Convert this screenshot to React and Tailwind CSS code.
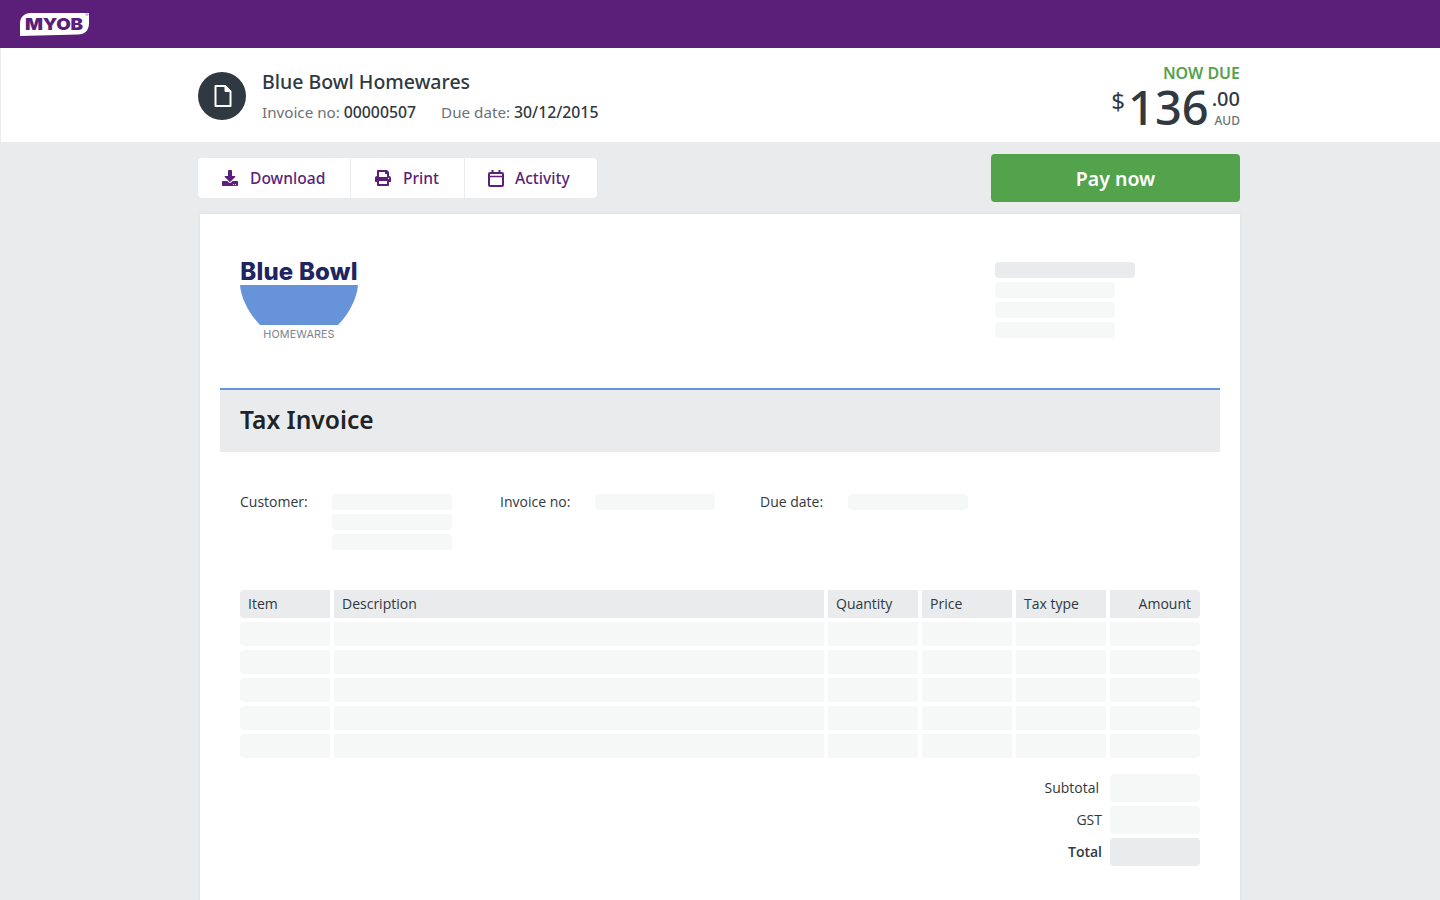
import { FaDownload, FaPrint } from 'react-icons/fa';

const columns = [
    { label: 'Item', width: 'w-[90px]' },
    { label: 'Description', width: 'w-[490px]' },
    { label: 'Quantity', width: 'w-[90px]' },
    { label: 'Price', width: 'w-[90px]' },
    { label: 'Tax type', width: 'w-[90px]' },
    { label: 'Amount', width: 'w-[90px]', right: true },
];

const rows = [0, 1, 2, 3, 4];

function MyobLogo() {
    return (
        <div className="relative w-[69px] h-[24px]">
            <svg width="69" height="24" viewBox="0 0 69 24" className="absolute left-0 top-0">
                <path d="M0 24 L0 12 C0 5 4 1 11 1 L69 1 L69 11 C69 18 65 22.5 58 22.5 Z" fill="#fff" />
            </svg>
            <span className="absolute left-[5px] top-[3px] origin-left scale-x-[1.14] font-['Inter',sans-serif] font-black text-[16.5px] leading-[18px] text-[#5b1f7a] tracking-[-0.2px]">
                MYOB
            </span>
            <span className="absolute right-[0.5px] top-[1px] text-[4px] leading-[4px] text-[#5b1f7a]">®</span>
        </div>
    );
}

function ToolButton({ icon, label, className }) {
    return (
        <div className={`flex items-center h-10 text-[#5b1f7a] font-medium text-[15.6px] ${className}`}>
            {icon}
            <span className="mt-[2px]">{label}</span>
        </div>
    );
}

function Placeholder({ className }) {
    return <div className={`rounded-[4px] bg-[#f6f7f7] ${className}`} />;
}

function TotalRow({ label, labelClass, boxClass }) {
    return (
        <div className="flex items-center justify-end">
            <span className={`text-sm ${labelClass}`}>{label}</span>
            <div className={`w-[90px] h-7 rounded-[4px] ${boxClass}`} />
        </div>
    );
}

export default function App() {
    return (
        <div className="h-screen overflow-hidden bg-[#e9ebec] font-['Open_Sans',sans-serif] text-[#303841]">
            {/* Top bar */}
            <header className="h-12 bg-[#5b1f7a] flex items-center pl-5">
                <MyobLogo />
            </header>

            {/* Invoice summary */}
            <section className="h-[94px] ml-[1px] pr-[3px] bg-white flex justify-center">
                <div className="w-[1042px] flex items-center justify-between">
                    <div className="flex items-center pt-[2px]">
                        <div className="size-12 rounded-full bg-[#303841] flex items-center justify-center">
                            <svg width="20" height="24" viewBox="0 0 20 24" fill="none" stroke="#fff" strokeWidth="2" strokeLinejoin="round" className="ml-[2px]">
                                <path d="M2.5 2 H12 L17.5 7.5 V22 H2.5 Z" />
                                <path d="M12 2 V7.5 H17.5" fill="#fff" strokeWidth="1" />
                            </svg>
                        </div>
                        <div className="ml-4">
                            <div className="font-['Noto_Sans',sans-serif] font-medium text-[19.5px] leading-7">Blue Bowl Homewares</div>
                            <div className="flex mt-1 font-['Noto_Sans',sans-serif] text-[15.2px] leading-6 text-[#6b7178]">
                                <span>Invoice no: <span className="font-medium text-[15.8px] text-[#303841]">00000507</span></span>
                                <span className="ml-[25px]">Due date: <span className="font-medium text-[15.8px] text-[#303841]">30/12/2015</span></span>
                            </div>
                        </div>
                    </div>
                    <div className="flex flex-col items-end self-start pt-[15px] font-['Noto_Sans',sans-serif]">
                        <div className="font-semibold text-[16px] leading-5 text-[#53a24c]">NOW DUE</div>
                        <div className="flex items-start">
                            <span className="text-[24px] leading-6 mt-[6px] mr-[3px]">$</span>
                            <span className="text-[47px] leading-[48px] font-medium">136</span>
                            <div className="flex flex-col items-end ml-[3px]">
                                <span className="text-[20px] leading-6 mt-1 font-medium">.00</span>
                                <span className="text-xs leading-4 mt-[2px] text-[#6b7178] font-medium">AUD</span>
                            </div>
                        </div>
                    </div>
                </div>
            </section>

            {/* Actions */}
            <div className="h-[72px] pr-[2px] flex justify-center">
                <div className="w-[1042px] flex items-center justify-between font-['Noto_Sans',sans-serif]">
                    <div className="flex bg-white rounded-[4px] shadow-[0_0_1px_rgba(0,0,0,0.08)]">
                        <ToolButton
                            className="w-[153px] pl-6 border-r border-[#e9ebec]"
                            icon={<FaDownload size={16} className="mr-[12px]" />}
                            label="Download"
                        />
                        <ToolButton
                            className="w-[114px] pl-6 border-r border-[#e9ebec]"
                            icon={<FaPrint size={16} className="mr-[12px]" />}
                            label="Print"
                        />
                        <ToolButton
                            className="w-[132px] pl-6"
                            icon={
                                <svg width="16" height="17" viewBox="0 0 16 17" fill="none" stroke="currentColor" strokeWidth="2" className="mr-[11px] -ml-[1px]">
                                    <rect x="1" y="3" width="14" height="13" rx="1" />
                                    <path d="M1 6.5 H15" strokeWidth="1.5" />
                                    <path d="M4.5 0 V3 M11.5 0 V3" />
                                </svg>
                            }
                            label="Activity"
                        />
                    </div>
                    <button className="w-[249px] h-12 pt-[2px] rounded-[4px] bg-[#53a24c] text-white font-semibold text-[19.5px]">
                        Pay now
                    </button>
                </div>
            </div>

            {/* Invoice document */}
            <div className="flex justify-center">
                <main className="w-[1040px] h-[800px] bg-white px-5 shadow-[0_0_4px_rgba(0,0,0,0.06)]">
                    <div className="h-[174px] flex justify-between pl-5 pr-[85px] pt-[44px]">
                        <div className="w-[118px] flex flex-col items-center">
                            <div className="font-['Inter',sans-serif] font-extrabold text-[24px] tracking-[0.2px] leading-[27px] whitespace-nowrap text-[#1e2560]">Blue Bowl</div>
                            <svg width="118" height="40" viewBox="0 0 118 40" className="block">
                                <path d="M0 0 H118 C117 14 108 30 98 40 H20 C10 30 1 14 0 0 Z" fill="#6794d9" />
                            </svg>
                            <div className="font-['Inter',sans-serif] text-[10.8px] tracking-[0.1px] leading-5 text-[#7c8190]">HOMEWARES</div>
                        </div>
                        <div className="flex flex-col gap-1 pt-1">
                            <div className="w-[140px] h-4 rounded-[4px] bg-[#e9ebec]" />
                            <Placeholder className="w-[120px] h-4" />
                            <Placeholder className="w-[120px] h-4" />
                            <Placeholder className="w-[120px] h-4" />
                        </div>
                    </div>

                    <div className="h-16 border-t-2 border-[#6794d9] bg-[#e9ebec] flex items-center pl-5">
                        <h1 className="-mt-[2px] font-['Noto_Sans',sans-serif] font-semibold text-[24.6px] text-[#1f2327]">Tax Invoice</h1>
                    </div>

                    <div className="flex pl-5 pt-[42px] text-sm leading-4">
                        <span className="w-[92px] text-[#303841]">Customer:</span>
                        <div className="flex flex-col gap-1 w-[168px]">
                            <Placeholder className="w-[120px] h-4" />
                            <Placeholder className="w-[120px] h-4" />
                            <Placeholder className="w-[120px] h-4" />
                        </div>
                        <span className="w-[95px]">Invoice no:</span>
                        <Placeholder className="w-[120px] h-4" />
                        <span className="w-[88px] ml-[45px]">Due date:</span>
                        <Placeholder className="w-[120px] h-4" />
                    </div>

                    <div className="px-5 mt-10">
                        <div className="flex gap-1">
                            {columns.map((col, i) => (
                                <div
                                    key={col.label}
                                    className={`${col.width} h-7 bg-[#e9ebec] flex items-center text-sm ${col.right ? 'justify-end pr-[9px] rounded-r-[4px]' : 'pl-2'} ${i === 0 ? 'rounded-l-[4px]' : ''}`}
                                >
                                    {col.label}
                                </div>
                            ))}
                        </div>
                        <div className="flex flex-col gap-1 mt-1">
                            {rows.map((row) => (
                                <div key={row} className="flex gap-1">
                                    {columns.map((col, i) => (
                                        <div
                                            key={col.label}
                                            className={`${col.width} h-6 bg-[#f6f7f7] ${i === 0 ? 'rounded-l-[4px]' : ''} ${col.right ? 'rounded-r-[4px]' : ''}`}
                                        />
                                    ))}
                                </div>
                            ))}
                        </div>
                        <div className="flex flex-col gap-1 mt-4">
                            <TotalRow label="Subtotal" labelClass="mr-[11px]" boxClass="bg-[#f6f7f7]" />
                            <TotalRow label="GST" labelClass="mr-2" boxClass="bg-[#f6f7f7]" />
                            <TotalRow label="Total" labelClass="mr-2 font-semibold" boxClass="bg-[#e9ebec]" />
                        </div>
                    </div>
                </main>
            </div>
        </div>
    );
}
